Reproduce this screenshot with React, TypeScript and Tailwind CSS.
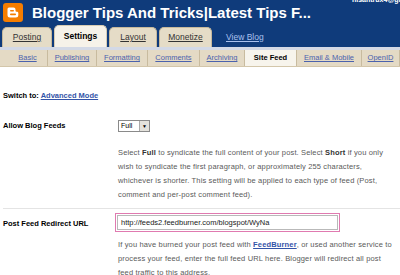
import React from "react";

const BloggerLogo = () => (
  <svg width="20" height="19" viewBox="0 0 20 19">
    <rect x="0" y="0" width="20" height="19" rx="3" fill="#f57d00" />
    <path
      d="M6 4.5h4.5a2 2 0 0 1 2 2v1.2a1 1 0 0 0 1 1h0.5a1.3 1.3 0 0 1 1.3 1.3v2a2.5 2.5 0 0 1-2.5 2.5H7A2.5 2.5 0 0 1 4.5 12V6A1.5 1.5 0 0 1 6 4.5z"
      fill="#fff"
    />
    <rect x="7" y="7" width="4" height="1.6" rx="0.8" fill="#f57d00" />
    <rect x="7" y="10.6" width="6" height="1.6" rx="0.8" fill="#f57d00" />
  </svg>
);

export default function App() {
  const subTabs: { label: string; w: string; active?: boolean }[] = [
    { label: "Basic", w: "w-[48px] pl-[8px]" },
    { label: "Publishing", w: "w-[49px]" },
    { label: "Formatting", w: "w-[51px]" },
    { label: "Comments", w: "w-[52px]" },
    { label: "Archiving", w: "w-[45px]" },
    { label: "Site Feed", w: "w-[52px]", active: true },
    { label: "Email & Mobile", w: "w-[65px]" },
    { label: "OpenID", w: "w-[38px]" },
  ];

  return (
    <div
      className="w-[400px] h-[275px] overflow-hidden bg-white text-[7.5px] text-[#333]"
      style={{ fontFamily: '"Liberation Sans", Arial, sans-serif' }}
    >
      {/* Header */}
      <div className="relative bg-[#0f3b7b] h-[47px] flex flex-col">
        <div className="absolute left-[352px] top-[-5px] text-[7px] font-bold text-white whitespace-nowrap">
          nisantrux4@gmail.com
        </div>
        <div className="flex items-center h-[24px] pl-[3px]">
          <BloggerLogo />
          <span className="ml-[9px] text-white font-bold text-[15px] leading-none">
            Blogger Tips And Tricks|Latest Tips F...
          </span>
        </div>
        <div className="flex items-end h-[23px] pl-[2px]">
          <div className="w-[50px] h-[20px] mr-[2px] bg-[#e5dcc7] border border-b-0 border-[#c7b99c] rounded-t-[5px] flex items-center justify-center text-[8.5px] text-[#333] underline">
            Posting
          </div>
          <div className="w-[53px] h-[22px] mr-[2px] bg-[#f6f2e9] border border-b-0 border-[#d8ccb3] rounded-t-[5px] flex items-center justify-center text-[8.5px] font-bold text-black">
            Settings
          </div>
          <div className="w-[48px] h-[20px] mr-[2px] bg-[#e5dcc7] border border-b-0 border-[#c7b99c] rounded-t-[5px] flex items-center justify-center text-[8.5px] text-[#333] underline">
            Layout
          </div>
          <div className="w-[53px] h-[20px] bg-[#e5dcc7] border border-b-0 border-[#c7b99c] rounded-t-[5px] flex items-center justify-center text-[8.5px] text-[#333] underline">
            Monetize
          </div>
          <div className="ml-[14px] h-[20px] flex items-center text-[8.5px] text-[#a9c1ee] underline">
            View Blog
          </div>
        </div>
      </div>
      <div className="h-[3px] bg-[#d3d9e6]" />
      {/* Sub tabs */}
      <div className="flex h-[17px] bg-[#e4dac5] border-b border-[#d3c6aa]">
        {subTabs.map((t) => (
          <div
            key={t.label}
            className={
              "flex-none h-full flex items-center justify-center border-r border-[#c8bb9f] " +
              t.w +
              (t.active ? " bg-[#f7f4ec] font-bold text-black" : " text-[#4b62ad] underline")
            }
          >
            {t.label}
          </div>
        ))}
      </div>
      {/* Content */}
      <div className="pl-[3px] pt-[23px]">
        <div className="font-bold text-black">
          Switch to: <span className="text-[#3354a8] underline">Advanced Mode</span>
        </div>
        <div className="flex mt-[18px]">
          <div className="w-[115px] flex-none font-bold text-black pt-[1px]">Allow Blog Feeds</div>
          <div className="flex-1 pr-[4px]">
            <div className="mt-[1px] w-[32px] h-[12px] border border-[#8a8a8a] flex items-center justify-between pl-[2px] text-black text-[7px]">
              <span>Full</span>
              <span className="w-[10px] h-full bg-[#e4e2dc] border-l border-[#aaa] flex items-center justify-center text-[5px]">▼</span>
            </div>
            <p className="mt-[14px] leading-[14px] text-[#5a5a5a] tracking-[0.15px]">
              Select <b className="text-[#333]">Full</b> to syndicate the full content of your post. Select <b className="text-[#333]">Short</b> if you only wish to syndicate the first paragraph, or approximately 255 characters, whichever is shorter. This setting will be applied to each type of feed (Post, comment and per-post comment feed).
            </p>
          </div>
        </div>
        <div className="h-px bg-[#e4e4e4] mt-[6px]" />
        <div className="flex mt-[4px]">
          <div className="w-[112px] flex-none font-bold text-black pt-[5px]">Post Feed Redirect URL</div>
          <div className="flex-1 pr-[4px]">
            <div className="w-[225px] h-[19px] border border-[#e07ab0] p-[1px]">
              <div className="h-full border border-[#b9b9b9] flex items-center pl-[3px] text-[7.5px] text-[#222]">
                http://feeds2.feedburner.com/blogspot/WyNa
              </div>
            </div>
            <p className="mt-[6px] pl-[3px] leading-[14px] text-[#5a5a5a] tracking-[0.15px]">
              If you have burned your post feed with <b className="text-[#3354a8] underline">FeedBurner</b>, or used another service to process your feed, enter the full feed URL here. Blogger will redirect all post feed traffic to this address.
            </p>
          </div>
        </div>
      </div>
    </div>
  );
}
